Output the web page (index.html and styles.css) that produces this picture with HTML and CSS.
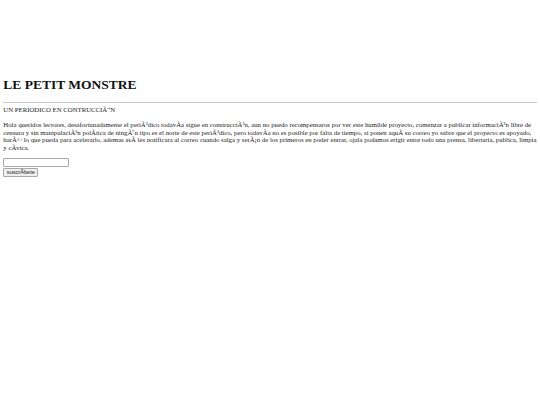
FILE: index.html
```html
<!DOCTYPE html>
<html lang="es">
<head>
<meta charset="utf-8">
<title>LE PETIT MONSTRE</title>
<link rel="stylesheet" href="styles.css">
</head>
<body>
<header class="masthead">
<h1 class="title">LE PETIT MONSTRE</h1>
<hr class="rule">
<div class="subtitle">UN PERIODICO EN CONTRUCCIÃ“N</div>
</header>
<p class="intro">Hola queridos lectores, desafortunadamente el periÃ³dico todavÃ&shy;a sigue en construcciÃ³n, aun no puedo recompensaros por ver este humilde proyecto, comenzar a publicar informaciÃ³n libre de censura y sin manipulaciÃ³n polÃ&shy;tica de ningÃºn tipo es el norte de este periÃ³dico, pero todavÃ&shy;a no es posible por falta de tiempo, si ponen aquÃ&shy; su correo yo sabre que el proyecto es apoyado, harÃ© lo que pueda para acelerarlo, ademas asÃ&shy; les notificara al correo cuando salga y serÃ¡n de los primeros en poder entrar, ojala podamos erigir entre todo una prensa, libertaria, publica, limpia y cÃ&shy;vica.</p>
<form class="signup">
<input class="email" type="text">
<button class="submit" type="button">suscrÃ&shy;bete</button>
</form>
</body>
</html>
```
FILE: styles.css
```css
html, body {
  background: #ffffff;
}
body {
  margin: 0 3.33px;
  font-family: "Liberation Serif", "Times New Roman", serif;
  color: #000000;
  font-size: 6.77px;
}
.masthead {
  padding-top: 68px;
}
.title {
  font-size: 13.5px;
  font-weight: bold;
  margin: 8.9px 0;
  line-height: normal;
  color: #111111;
}
.rule {
  border: 0;
  border-top: 1px solid #c8c8c8;
  margin: 3.33px 0;
}
.subtitle {
  font-size: 6.77px;
  line-height: normal;
  color: #222222;
}
.intro {
  font-size: 6.77px;
  line-height: 7.5px;
  margin: 8px 0 0;
  color: #222222;
}
.signup {
  display: flex;
  flex-direction: column;
  align-items: flex-start;
  gap: 1.5px;
  margin-top: 7px;
}
.email {
  box-sizing: border-box;
  width: 66px;
  height: 8.5px;
  margin: 0;
  padding: 0;
  border: 1px solid #a8a8a8;
  border-radius: 1px;
  background: #ffffff;
}
.submit {
  box-sizing: border-box;
  height: 8.5px;
  width: 35px;
  margin: 0;
  padding: 0;
  font-family: "Liberation Sans", Arial, sans-serif;
  font-size: 5.6px;
  line-height: 1;
  color: #222222;
  background: #efefef;
  border: 1px solid #a8a8a8;
  border-radius: 1px;
}
```
